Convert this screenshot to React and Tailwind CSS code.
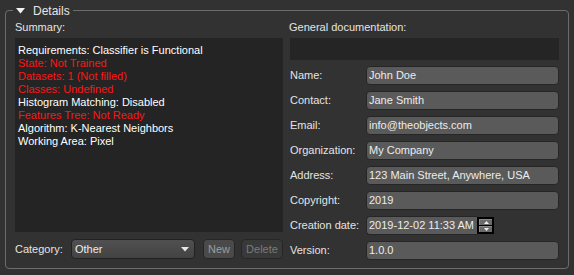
import React from "react";

const summary = [
  { text: "Requirements: Classifier is Functional", bad: false },
  { text: "State: Not Trained", bad: true },
  { text: "Datasets: 1 (Not filled)", bad: true },
  { text: "Classes: Undefined", bad: true },
  { text: "Histogram Matching: Disabled", bad: false },
  { text: "Features Tree: Not Ready", bad: true },
  { text: "Algorithm: K-Nearest Neighbors", bad: false },
  { text: "Working Area: Pixel", bad: false },
];

const fields = [
  ["Name:", "John Doe"],
  ["Contact:", "Jane Smith"],
  ["Email:", "info@theobjects.com"],
  ["Organization:", "My Company"],
  ["Address:", "123 Main Street, Anywhere, USA"],
  ["Copyright:", "2019"],
];

const Field = ({ value }) => (
  <div className="w-[193px] h-[19px] rounded-[4px] border border-[#262626] bg-[#5a5a5a] pl-[2px] leading-[17px] text-[#ececec] truncate">
    {value}
  </div>
);

const Row = ({ label, children }) => (
  <div className="flex items-center h-[19px]">
    <div className="w-[76px] text-[#e4e4e4]">{label}</div>
    {children}
  </div>
);

const DateEdit = () => (
  <div className="flex items-center w-[128px] h-[19px]">
    <div className="w-[111px] h-[19px] rounded-l-[4px] border border-r-0 border-[#262626] bg-[#5a5a5a] pl-[2px] leading-[17px] text-[#ececec] whitespace-nowrap overflow-hidden">
      2019-12-02 11:33 AM
    </div>
    <div className="w-[17px] h-[17px] border border-black bg-black flex flex-col gap-[1px] p-[1px]">
      <div className="flex-1 bg-[#6a6a6a] border-t border-l border-[#8a8a8a] flex items-center justify-center">
        <svg width="5" height="3" viewBox="0 0 5 3"><path d="M0 3 L2.5 0 L5 3 Z" fill="#f0f0f0" /></svg>
      </div>
      <div className="flex-1 bg-[#6a6a6a] border-t border-l border-[#8a8a8a] flex items-center justify-center">
        <svg width="5" height="3" viewBox="0 0 5 3"><path d="M0 0 L5 0 L2.5 3 Z" fill="#f0f0f0" /></svg>
      </div>
    </div>
  </div>
);

export default function App() {
  return (
    <div
      className="w-[574px] h-[275px] bg-[#323232] text-[11px] pt-0"
      style={{ fontFamily: '"Liberation Sans", Arial, sans-serif' }}
    >
      <fieldset className="ml-[5px] w-[564px] h-[269px] border border-[#6c6c6c] rounded-[4px] pl-[9px] pr-[8px]">
        <legend className="-ml-[2px] px-[3px] h-[21px] flex items-center text-[#e6e6e6]">
          <svg width="9" height="6" viewBox="0 0 9 6" className="mr-[8px]">
            <path d="M0 0 L9 0 L4.5 5.5 Z" fill="#f2f2f2" />
          </svg>
          <span className="text-[12px]">Details</span>
        </legend>

        <div className="flex gap-[7px]">
          <div className="w-[268px] flex flex-col">
            <div className="leading-[13px] text-[#e4e4e4]">Summary:</div>
            <div className="mt-[4px] h-[194px] bg-[#242424] pt-[6px] pl-[3px]">
              {summary.map((s) => (
                <div
                  key={s.text}
                  className={`leading-[13px] whitespace-nowrap ${s.bad ? "text-[#ff1414]" : "text-white"}`}
                >
                  {s.text}
                </div>
              ))}
            </div>
            <div className="mt-[7px] flex items-center h-[20px]">
              <span className="w-[56px] text-[#e4e4e4]">Category:</span>
              <div className="w-[124px] h-[20px] rounded-[4px] border border-[#222] bg-gradient-to-b from-[#505050] to-[#434343] flex items-center justify-between pl-[3px] pr-[5px] text-[#ececec]">
                <span>Other</span>
                <svg width="8" height="5" viewBox="0 0 8 5"><path d="M0 0 L8 0 L4 4.5 Z" fill="#e6e6e6" /></svg>
              </div>
              <div className="ml-[8px] w-[32px] h-[20px] rounded-[4px] border border-[#262626] bg-[#4a4a4a] flex items-center justify-center text-[#9c9c9c]">
                New
              </div>
              <div className="ml-[6px] w-[42px] h-[20px] rounded-[4px] border border-[#262626] bg-[#393939] flex items-center justify-center text-[#7a7a7a]">
                Delete
              </div>
            </div>
          </div>

          <div className="w-[269px] flex flex-col">
            <div className="leading-[13px] text-[#e4e4e4] -ml-[1px]">General documentation:</div>
            <div className="mt-[4px] h-[22px] bg-[#252525]" />
            <div className="mt-[6px] flex flex-col gap-[6px]">
              {fields.map(([l, v]) => (
                <Row key={l} label={l}>
                  <Field value={v} />
                </Row>
              ))}
              <Row label="Creation date:">
                <DateEdit />
              </Row>
              <Row label="Version:">
                <Field value="1.0.0" />
              </Row>
            </div>
          </div>
        </div>
      </fieldset>
    </div>
  );
}
